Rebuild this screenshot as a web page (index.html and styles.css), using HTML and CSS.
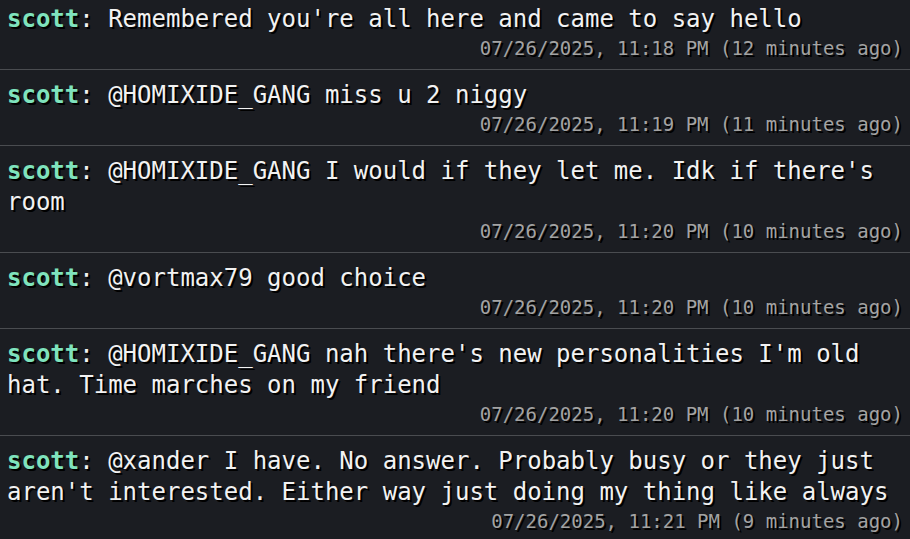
FILE: index.html
```html
<!DOCTYPE html>
<html>
<head>
<meta charset="utf-8">
<link rel="stylesheet" href="styles.css">
</head>
<body>
<div class="feed">
  <div class="msg">
    <div class="text"><span class="name">scott</span>: Remembered you're all here and came to say hello</div>
    <div class="time">07/26/2025, 11:18 PM (12 minutes ago)</div>
  </div>
  <div class="msg">
    <div class="text"><span class="name">scott</span>: @HOMIXIDE_GANG miss u 2 niggy</div>
    <div class="time">07/26/2025, 11:19 PM (11 minutes ago)</div>
  </div>
  <div class="msg">
    <div class="text"><span class="name">scott</span>: @HOMIXIDE_GANG I would if they let me. Idk if there's room</div>
    <div class="time">07/26/2025, 11:20 PM (10 minutes ago)</div>
  </div>
  <div class="msg">
    <div class="text"><span class="name">scott</span>: @vortmax79 good choice</div>
    <div class="time">07/26/2025, 11:20 PM (10 minutes ago)</div>
  </div>
  <div class="msg">
    <div class="text"><span class="name">scott</span>: @HOMIXIDE_GANG nah there's new personalities I'm old hat. Time marches on my friend</div>
    <div class="time">07/26/2025, 11:20 PM (10 minutes ago)</div>
  </div>
  <div class="msg">
    <div class="text"><span class="name">scott</span>: @xander I have. No answer. Probably busy or they just aren't interested. Either way just doing my thing like always</div>
    <div class="time">07/26/2025, 11:21 PM (9 minutes ago)</div>
  </div>
</div>
</body>
</html>
```
FILE: styles.css
```css
html, body {
  margin: 0;
  padding: 0;
  background: #1b1d22;
  overflow: hidden;
}
.feed {
  margin-top: -7px;
  display: flex;
  flex-direction: column;
}
.msg {
  padding: 10px 7px 8px 7px;
  border-top: 1px solid #4a4c50;
}
.msg:first-child {
  border-top: none;
  padding-top: 11px;
}
.text {
  font-family: "DejaVu Sans Mono", "Liberation Mono", monospace;
  font-size: 24px;
  line-height: 31px;
  color: #f2f2f2;
  text-shadow: 2px 2px 0 #000;
}
.name {
  color: #7fe3bd;
  font-weight: bold;
}
.time {
  font-family: "DejaVu Sans Mono", "Liberation Mono", monospace;
  font-size: 19px;
  line-height: 26px;
  color: #a3a3a3;
  text-align: right;
  text-shadow: 2px 2px 0 #000;
}
```
